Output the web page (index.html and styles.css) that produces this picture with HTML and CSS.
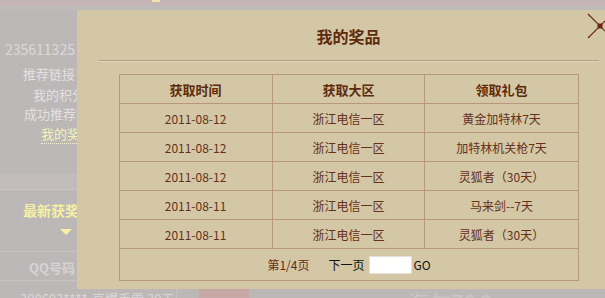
FILE: index.html
```html
<!DOCTYPE html>
<html lang="zh-CN">
<head>
    <meta charset="UTF-8">
    <title>我的奖品</title>
    <link rel="stylesheet" href="styles.css">
</head>
<body>

<div id="page">
    <div class="topbar"><span class="topmark"></span></div>
    <div class="side">
        <div class="uid">235611325，推荐好友获得积分</div>
        <div class="line l1">推荐链接：http://act.qq.com</div>
        <div class="line l2">我的积分：0</div>
        <div class="line l3">成功推荐好友：0</div>
        <div class="line l4"><a href="#">我的奖品</a></div>
        <div class="band"></div>
        <div class="latest">
            <div class="latest-title">最新获奖</div>
            <div class="arrow"></div>
        </div>
        <div class="qq">QQ号码</div>
        <div class="bottom-row">
            <span class="b-qq">308603****</span>
            <span class="b-gift">高爆手雷 30天</span>
            <span class="b-sep"></span>
            <span class="b-logo"></span>
            <span class="b-big">海尔76 3</span>
        </div>
    </div>
</div>

<div id="dialog">
    <div class="dialog-title">我的奖品</div>
    <svg class="close" width="26" height="26" viewBox="0 0 26 26">
        <line x1="1" y1="1" x2="25" y2="25" stroke="#6b2a12" stroke-width="1.2"/>
        <line x1="25" y1="1" x2="1" y2="25" stroke="#6b2a12" stroke-width="1.2"/>
        <rect x="10.5" y="10.5" width="5" height="5" fill="#6b2a12"/>
    </svg>
    <div class="divider"></div>

    <table class="prizes">
        <tr>
            <th>获取时间</th>
            <th>获取大区</th>
            <th>领取礼包</th>
        </tr>
        <tr><td>2011-08-12</td><td>浙江电信一区</td><td>黄金加特林7天</td></tr>
        <tr><td>2011-08-12</td><td>浙江电信一区</td><td>加特林机关枪7天</td></tr>
        <tr><td>2011-08-12</td><td>浙江电信一区</td><td>灵狐者（30天）</td></tr>
        <tr><td>2011-08-11</td><td>浙江电信一区</td><td>马来剑--7天</td></tr>
        <tr><td>2011-08-11</td><td>浙江电信一区</td><td>灵狐者（30天）</td></tr>
        <tr class="pager-row">
            <td colspan="3">
                <div class="pager">
                    <span class="page-no">第1/4页</span>
                    <a href="#" class="next">下一页</a>
                    <input type="text" class="page-input">
                    <span class="go">GO</span>
                </div>
            </td>
        </tr>
    </table>
</div>

</body>
</html>
```

FILE: styles.css
```css
body {
    margin: 0;
    width: 605px;
    height: 298px;
    overflow: hidden;
    position: relative;
    font-family: "Noto Sans CJK SC", "Noto Sans", sans-serif;
    background: #bcb8b8;
}

#page {
    width: 605px;
    height: 298px;
}

.topbar {
    height: 6px;
    background: #c5b5b8;
    border-bottom: 4px solid #c0bbbb;
    position: relative;
}

.topmark {
    display: block;
    margin-left: 152px;
    width: 8px;
    height: 2px;
    background: #f4e2a8;
}

.side {
    color: #e4e0e0;
    font-size: 13px;
    white-space: nowrap;
}

.uid {
    padding: 30px 0 0 5px;
    height: 19px;
    line-height: 19px;
    font-size: 14px;
    color: #dcd8d8;
}

.line {
    height: 19px;
    line-height: 19px;
}

.l1 { margin-top: 5px; padding-left: 23px; }
.l2 { margin-top: 2px; padding-left: 33px; }
.l3 { padding-left: 24px; }
.l4 { margin-top: 1px; padding-left: 41px; }

.l4 a {
    color: #f5f0b4;
    text-decoration: none;
    border-bottom: 1px dotted #f5f0d0;
}

.band {
    margin-top: 31px;
    height: 15px;
    background: #c2bcbc;
    border-bottom: 1px solid #cac4c2;
}

.latest {
    height: 61px;
    border-bottom: 1px solid #c8c2c0;
}

.latest-title {
    padding: 11px 0 0 23px;
    font-size: 14px;
    font-weight: bold;
    color: #f6f0a2;
    line-height: 18px;
}

.arrow {
    margin: 10px 0 0 60px;
    width: 0;
    height: 0;
    border-left: 6px solid transparent;
    border-right: 6px solid transparent;
    border-top: 6px solid #f6f0a2;
}

.qq {
    height: 28px;
    line-height: 32px;
    padding-left: 29px;
    font-weight: bold;
    color: #d6d2d2;
    border-bottom: 1px solid #c8c2c0;
}

.bottom-row {
    display: flex;
    align-items: flex-start;
    height: 20px;
    line-height: 20px;
    color: #dcd8d8;
    margin-top: 8px;
}

.b-qq { margin-left: 20px; width: 72px; }
.b-gift { width: 84px; }

.b-sep {
    width: 1px;
    height: 20px;
    margin-top: -8px;
    background: #c8c2c0;
}

.b-logo {
    margin-left: 22px;
    width: 50px;
    height: 20px;
    background: #c6a8a4;
}

.b-big {
    margin-left: 158px;
    font-size: 22px;
    line-height: 24px;
    color: #cac6c6;
}

/* dialog */
#dialog {
    position: absolute;
    left: 77px;
    top: 10px;
    width: 543px;
    height: 279px;
    background: #d3c7a5;
}

.dialog-title {
    height: 50px;
    line-height: 52px;
    text-align: center;
    font-size: 16px;
    font-weight: bold;
    color: #5e2a0c;
}

.close {
    position: absolute;
    left: 510px;
    top: 3px;
}

.divider {
    margin: 0 auto;
    width: 500px;
    height: 1px;
    background: #b09e7c;
    border-bottom: 1px solid #e2d8c0;
}

.prizes {
    margin: 12px auto 0;
    width: 460px;
    border-collapse: collapse;
    font-size: 12px;
    color: #66301a;
}

.prizes th,
.prizes td {
    border: 1px solid #b8987a;
    height: 28px;
    padding: 0;
    text-align: center;
    vertical-align: middle;
}

.prizes th {
    font-size: 13px;
    color: #5e2a0c;
    width: 153px;
}

.pager-row td {
    height: 31px;
}

.pager {
    display: flex;
    justify-content: center;
    align-items: center;
    padding-left: 1px;
}

.page-no {
    color: #6a2c12;
}

.next {
    margin-left: 19px;
    color: #111;
    text-decoration: none;
}

.page-input {
    margin-left: 5px;
    width: 39px;
    height: 14px;
    padding: 1px;
    border: 1px solid #e4e0d8;
    background: #fff;
}

.go {
    margin-left: 1px;
    color: #111;
}
```
